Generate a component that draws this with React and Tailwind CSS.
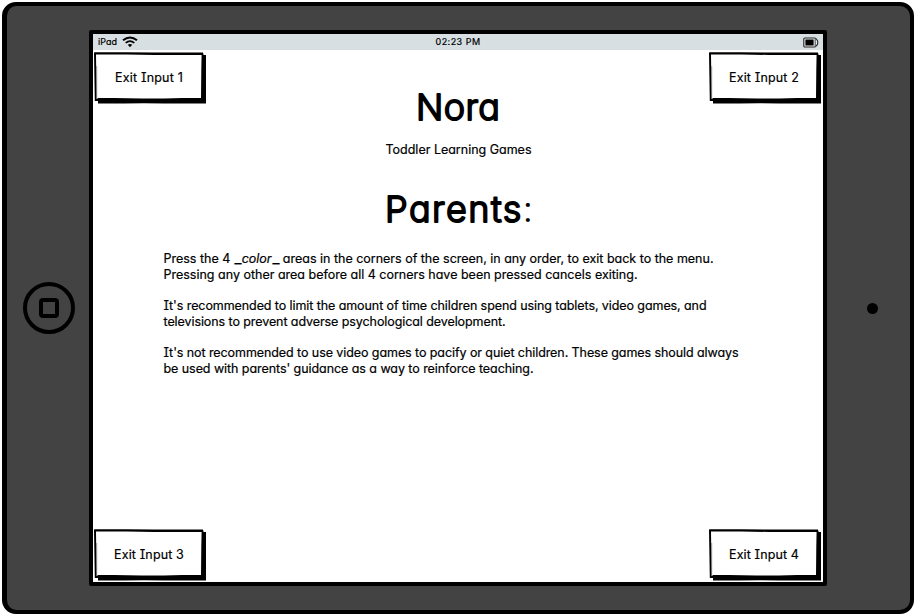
import React, { useLayoutEffect, useRef, useState } from "react";

// Tracks a single line of text out (or in) until it fills its container's width.
function Line({ className = "", children }) {
  const box = useRef(null);
  const text = useRef(null);
  const [spacing, setSpacing] = useState(0);
  useLayoutEffect(() => {
    const count = text.current.textContent.length;
    const spare = box.current.clientWidth - text.current.getBoundingClientRect().width;
    setSpacing(spare / count);
  }, []);
  return (
    <div ref={box} className={`whitespace-nowrap ${className}`}>
      <span ref={text} style={{ letterSpacing: `${spacing}px` }}>{children}</span>
    </div>
  );
}

// Marker-style heading: light letters with a rounded outline.
function Heading({ children, width, className, tail }) {
  return (
    <h1 className={className}>
      <svg width="160" height="50" className="overflow-visible">
        <text x="0" y="36.5" textLength={width} fontSize="36" fontWeight="300" stroke="#000" strokeWidth="1.8" strokeLinejoin="round">
          {children}
          {tail && <tspan strokeWidth=".2">{tail}</tspan>}
        </text>
      </svg>
    </h1>
  );
}

function Underscore() {
  return <span className="mx-px inline-block scale-x-120 font-semibold">_</span>;
}

function ExitButton({ label, width }) {
  return (
    <button className="relative flex h-[52px] w-[112px] justify-center pr-[2px] pt-[18px]">
      <svg className="absolute inset-0" width="112" height="52" viewBox="0 0 112 52">
        <path d="M4 3H112V51.6H70L50 51.2L30 51.6H4V49H.8L0 .6L1 .2H32L60 .6L109 .4L109.6 3Z" fill="#000" />
        <path d="M2 2.6L32 2.4L60 3H107.6L107.3 18L107 46H88L70 46.6L48 46.4L20 46H4L3 47H2.6Z" fill="#fff" />
        <path d="M2.7 14V46.5" stroke="#666" strokeWidth=".6" />
      </svg>
      <Line className={`relative text-[12.5px] leading-4 ${width}`}>{label}</Line>
    </button>
  );
}

function Wifi() {
  return (
    <svg width="16" height="12" viewBox="0 0 16 12" fill="none" stroke="#000">
      <path d="M1 4.2Q8-1.3 15 4.2" strokeWidth="2" />
      <path d="M3.7 6.8Q8 3.3 12.3 6.8" strokeWidth="1.7" />
      <path d="M5.8 8.8Q8 7.1 10.2 8.8L8 11.2Z" fill="#000" stroke="none" />
    </svg>
  );
}

function Battery() {
  return (
    <svg width="16" height="11" viewBox="0 0 16 11">
      <path d="M1.8 1H11.5Q13 1 13.4 2.2Q14.8 3 14.8 5.4Q14.8 7.8 13.4 8.6Q13 10 11.5 10H1.8Q.8 10 .8 9V2Q.8 1 1.8 1Z" fill="#e8edef" stroke="#222" strokeWidth="1.1" />
      <rect x="2.4" y="2.5" width="8.2" height="6" fill="#000" />
      <path d="M12.2 2V9" stroke="#333" strokeWidth=".9" />
    </svg>
  );
}

export default function App() {
  return (
    <div className="h-[616px] w-[916px] overflow-hidden bg-white pl-[2px] pt-[2px] font-['Inter',sans-serif] text-black [-webkit-text-stroke:0.2px_#000] [font-feature-settings:'cv11','cv08','calt'_0]">
      <div className="flex h-[612px] w-[912px] rounded-[14px] border-4 border-l-[5px] border-black bg-[#434343]">
        <div className="flex w-[82px] items-center pl-[16px]">
          <svg width="52" height="52" viewBox="0 0 52 52" fill="none" stroke="#000" strokeWidth="4" className="-mt-px">
            <circle cx="26" cy="26" r="24" />
            <rect x="18" y="18" width="16" height="16" rx="2" />
          </svg>
        </div>

        <div className="mt-[24px] flex h-[556px] w-[738px] flex-col rounded-[2px] border-4 border-black bg-white">
          <div className="grid h-4 grid-cols-3 items-center bg-[#d7dfe2] text-[9px] leading-4">
            <div className="flex items-center gap-[5px] pl-[5px]">
              <Line className="w-[19px]">iPad</Line>
              <Wifi />
            </div>
            <div className="flex justify-center">
              <Line className="w-[45px]">02:23 PM</Line>
            </div>
            <div className="flex justify-end pr-[4px]">
              <Battery />
            </div>
          </div>

          <div className="flex h-[480px] justify-between pl-px pr-[2px] pt-[2px]">
            <ExitButton label="Exit Input 1" width="w-[68px]" />
            <div className="-ml-[49px] -mr-[37px] flex w-[576px] flex-col pt-[31px]">
              <Heading className="ml-[252px] h-[50px]" width="84">Nora</Heading>
              <Line className="ml-[222px] mt-[9px] w-[146px] text-[12.5px] leading-4">Toddler Learning Games</Line>
              <Heading className="ml-[221px] mt-[27px] h-[50px]" width="148" tail=":">Parents</Heading>
              <div className="mt-[16px] flex flex-col gap-[15px] text-[12.5px] leading-4">
                <div>
                  <Line className="h-4 w-[550px]">
                    Press the 4 <Underscore /><em>color</em><Underscore /> areas in the corners of the screen, in any order, to exit back to the menu.
                  </Line>
                  <Line className="w-[474px]">Pressing any other area before all 4 corners have been pressed cancels exiting.</Line>
                </div>
                <div>
                  <Line className="w-[543px]">It's recommended to limit the amount of time children spend using tablets, video games, and</Line>
                  <Line className="w-[342px]">televisions to prevent adverse psychological development.</Line>
                </div>
                <div>
                  <Line className="w-[575px]">It's not recommended to use video games to pacify or quiet children. These games should always</Line>
                  <Line className="w-[370px]">be used with parents' guidance as a way to reinforce teaching.</Line>
                </div>
              </div>
            </div>
            <ExitButton label="Exit Input 2" width="w-[70px]" />
          </div>

          <div className="-mt-px flex h-[52px] justify-between pl-px pr-[2px]">
            <ExitButton label="Exit Input 3" width="w-[70px]" />
            <ExitButton label="Exit Input 4" width="w-[70px]" />
          </div>
        </div>

        <div className="flex flex-1 items-center pl-[40px]">
          <div className="size-[11px] rounded-full bg-black" />
        </div>
      </div>
    </div>
  );
}
